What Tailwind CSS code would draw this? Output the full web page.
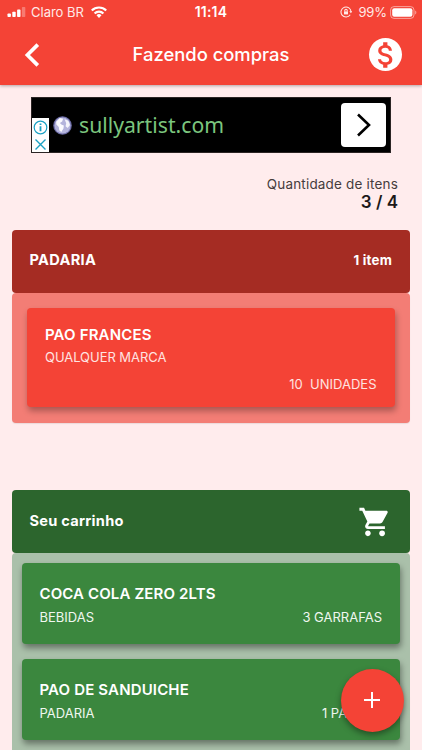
<!DOCTYPE html>
<html lang="pt-BR">
<head>
  <meta charset="UTF-8" />
  <meta name="viewport" content="width=device-width, initial-scale=1.0" />
  <title>Fazendo compras</title>
  <script src="https://cdn.jsdelivr.net/npm/@tailwindcss/browser@4"></script>
</head>
<body class="bg-[#ffeced] font-['Inter',sans-serif] text-white">
  <div class="relative h-[750px] w-[422px] overflow-hidden">

    <header class="h-[85px] bg-[#f44336] shadow-[0_1px_3px_rgba(0,0,0,0.3)]">
      <!-- Status bar -->
      <div class="grid h-6 grid-cols-3 items-center text-[13px] leading-6 text-[#ffe9e7]">
        <div class="flex items-center pl-[7px]">
          <svg class="h-[10px] w-[19px]" viewBox="0 0 19 10" fill="#fff">
            <rect x="0.5" y="6.5" width="3.4" height="3.5" rx="0.8" />
            <rect x="5.3" y="4.8" width="3.4" height="5.2" rx="0.8" />
            <rect x="10.1" y="2.6" width="3.4" height="7.4" rx="0.8" />
            <rect x="14.9" y="0" width="3.4" height="10" rx="0.8" opacity="0.3" />
          </svg>
          <span class="ml-[5px] whitespace-nowrap">Claro BR</span>
          <svg class="ml-[7px] h-3 w-4" viewBox="0 0 16 12" fill="none" stroke="#fff" stroke-width="2.2">
            <path d="M0.8 4.5a10.2 10.2 0 0 1 14.4 0" />
            <path d="M3.6 7.5a6.2 6.2 0 0 1 8.8 0" />
            <path d="M8 12L5.5 9.3a3.6 3.6 0 0 1 5 0z" fill="#fff" stroke="none" />
          </svg>
        </div>
        <div class="text-center text-[14px] font-semibold tracking-[0.2px] text-white">11:14</div>
        <div class="flex items-center justify-end pr-[5px]">
          <svg class="h-3 w-3" viewBox="0 0 12 12" fill="none" stroke="#ffe9e7" stroke-width="1.1">
            <path d="M10.2 8.7A5 5 0 1 1 11 6" />
            <path d="M9.3 5.3h3L10.9 7.3z" fill="#ffe9e7" stroke="none" />
            <rect x="4" y="5.4" width="4" height="3" fill="#ffe9e7" stroke="none" />
            <path d="M4.8 5.5V4.4a1.2 1.2 0 0 1 2.4 0v1.1" />
          </svg>
          <span class="ml-[6px] tracking-[-0.1px]">99%</span>
          <svg class="ml-[3px] h-[13px] w-[27px]" viewBox="0 0 27 13">
            <rect x="0.6" y="0.6" width="23.4" height="11.8" rx="3.4" fill="none" stroke="#fff" stroke-opacity="0.5" />
            <rect x="2.2" y="2.2" width="20.2" height="8.6" rx="2" fill="#fff" />
            <path d="M25.2 4.5c1.6.6 1.6 3.4 0 4z" fill="#fff" opacity="0.5" />
          </svg>
        </div>
      </div>

      <!-- App bar -->
      <div class="grid h-[61px] grid-cols-[1fr_auto_1fr] items-center pr-5 pl-5">
        <svg class="h-6 w-[35px]" viewBox="0 0 35 24" fill="none" stroke="#fff" stroke-width="3.7">
          <path d="M17.8 1.6L7.4 12l10.4 10.4" />
        </svg>
        <h1 class="text-[18.4px] font-medium whitespace-nowrap">Fazendo compras</h1>
        <div class="flex size-[33px] items-center justify-center justify-self-end rounded-full bg-white">
          <svg class="size-[34px] shrink-0" viewBox="0 0 24 24" fill="#f44336">
            <path d="M11.8 10.9c-2.27-.59-3-1.2-3-2.15 0-1.09 1.01-1.85 2.7-1.85 1.78 0 2.44.85 2.5 2.1h2.21c-.07-1.72-1.12-3.3-3.21-3.81V3h-3v2.16c-1.94.42-3.5 1.68-3.5 3.61 0 2.31 1.91 3.46 4.7 4.13 2.5.6 3 1.48 3 2.41 0 .69-.49 1.79-2.7 1.79-2.06 0-2.87-.92-2.98-2.1h-2.2c.12 2.19 1.76 3.42 3.68 3.83V21h3v-2.15c1.95-.37 3.5-1.5 3.5-3.55 0-2.84-2.43-3.81-4.7-4.4z" />
          </svg>
        </div>
      </div>
    </header>

    <main>
      <!-- Ad banner -->
      <div class="mt-3 ml-[31px] flex h-14 w-[360px] items-center border border-[#2b2424] bg-black">
        <div class="flex h-[34px] w-[17px] flex-col items-center justify-around self-end bg-white">
          <svg class="size-[15px]" viewBox="0 0 15 15" fill="none" stroke="#1ba1c4" stroke-width="1.2">
            <circle cx="7.5" cy="7.5" r="6.3" />
            <path d="M7.5 6.2v5M7.5 3.4v1.6" stroke-width="1.8" />
          </svg>
          <svg class="size-[13px]" viewBox="0 0 13 13" stroke="#1ba1c4" stroke-width="1.4">
            <path d="M1.5 1.5l10 10M11.5 1.5l-10 10" />
          </svg>
        </div>
        <svg class="ml-1 size-[19px]" viewBox="0 0 18 18">
          <circle cx="9" cy="9" r="8.8" fill="#6e6ea8" />
          <circle cx="9" cy="9" r="7.6" fill="#b4b4dc" />
          <path d="M3 5.5L6.5 2l3 .6-.8 2.6-2.2 1.4 1.8 1.8 2 .6-.4 2.8-2 3.4-2-1.6-.4-3.2L3.2 8z" fill="#fbfbff" />
          <path d="M11 3l3.5 1.4 1.6 4.2-2.2 2.8-2-1.6.6-3z" fill="#f4f4fb" />
        </svg>
        <span class="ml-[7px] font-['Noto_Sans',sans-serif] text-[21.2px] text-[#7bc67e]">sullyartist.com</span>
        <div class="mr-1 ml-auto flex h-11 w-[45px] items-center justify-center rounded-[4px] bg-white">
          <svg class="h-6 w-4" viewBox="0 0 16 24" fill="none" stroke="#000" stroke-width="2.6">
            <path d="M2 1.5L13 12 2 22.5" />
          </svg>
        </div>
      </div>

      <div class="mt-[22px] mr-6 text-right">
        <p class="text-[13.5px] leading-[18px] tracking-[0.18px] text-[#453c3d]">Quantidade de itens</p>
        <p class="text-[17px] leading-[18px] font-semibold text-[#1c1819]">3 / 4</p>
      </div>

      <!-- Pending items -->
      <section class="mt-[19px] mr-3 ml-[11.5px]">
        <div class="flex h-[62.5px] items-center justify-between rounded-[4px] bg-[#a52c23] px-[18px]">
          <h2 class="text-[14.6px] font-bold tracking-[0.3px]">PADARIA</h2>
          <span class="text-[13.3px] font-bold tracking-[0.2px]">1 item</span>
        </div>
        <div class="h-[130.5px] rounded-[4px] bg-[#f37d75] px-[15.5px] pt-[15.5px] shadow-[0_1px_1px_rgba(0,0,0,0.08)]">
          <div class="h-[98.5px] rounded-[4px] bg-[#f44336] px-[18px] pt-[17px] shadow-[1px_4px_6px_rgba(0,0,0,0.3)]">
            <h3 class="text-[15px] leading-5 font-semibold tracking-[0.15px]">PAO FRANCES</h3>
            <p class="mt-[2px] text-[13px] leading-5 tracking-[-0.05px] text-[#ffe4e1]">QUALQUER MARCA</p>
            <p class="mt-[7px] text-right text-[13px] leading-5 whitespace-pre text-[#ffe4e1]">10  UNIDADES</p>
          </div>
        </div>
      </section>

      <!-- Cart -->
      <section class="mt-[67px] mr-3 ml-[11.5px]">
        <div class="flex h-[63px] items-center justify-between rounded-[4px] bg-[#2c652d] pr-[18px] pl-[18px]">
          <h2 class="text-[14.6px] font-bold tracking-[0.25px]">Seu carrinho</h2>
          <svg class="size-[34px]" viewBox="0 0 24 24" fill="#fff">
            <path d="M7 18c-1.1 0-1.99.9-1.99 2S5.9 22 7 22s2-.9 2-2-.9-2-2-2zM1 2v2h2l3.6 7.59-1.35 2.45c-.16.28-.25.61-.25.96 0 1.1.9 2 2 2h12v-2H7.42c-.14 0-.25-.11-.25-.25l.03-.12.9-1.63h7.45c.75 0 1.41-.41 1.75-1.03l3.58-6.49c.08-.14.12-.31.12-.48 0-.55-.45-1-1-1H5.21l-.94-2H1z" />
            <circle cx="17" cy="20" r="2" />
          </svg>
        </div>
        <div class="flex h-[260px] flex-col gap-[15px] rounded-[4px] bg-[#aac0aa] px-[10px] pt-[10px]">
          <div class="h-[81px] rounded-[4px] bg-[#3b873e] px-[18px] pt-[21px] shadow-[1px_4px_6px_rgba(0,0,0,0.4)]">
            <h3 class="text-[15px] leading-5 font-semibold tracking-[0.12px]">COCA COLA ZERO 2LTS</h3>
            <div class="mt-[3px] flex justify-between text-[13px] leading-5 text-[#f0f7f0]">
              <span>BEBIDAS</span>
              <span>3 GARRAFAS</span>
            </div>
          </div>
          <div class="h-[81px] rounded-[4px] bg-[#3b873e] px-[18px] pt-[21px] shadow-[1px_4px_6px_rgba(0,0,0,0.4)]">
            <h3 class="text-[15px] leading-5 font-semibold tracking-[0.15px]">PAO DE SANDUICHE</h3>
            <div class="mt-[3px] flex justify-between text-[13px] leading-5 text-[#f0f7f0]">
              <span>PADARIA</span>
              <span>1 PACOTE</span>
            </div>
          </div>
        </div>
      </section>
    </main>

    <button class="absolute top-[668.5px] left-[340.5px] flex size-[63px] items-center justify-center rounded-full bg-[#f44336] shadow-[0_3px_6px_rgba(0,0,0,0.4)]">
      <svg class="size-4" viewBox="0 0 16 16" stroke="#fff" stroke-width="2">
        <path d="M8 0v16M0 8h16" />
      </svg>
    </button>
  </div>
</body>
</html>
